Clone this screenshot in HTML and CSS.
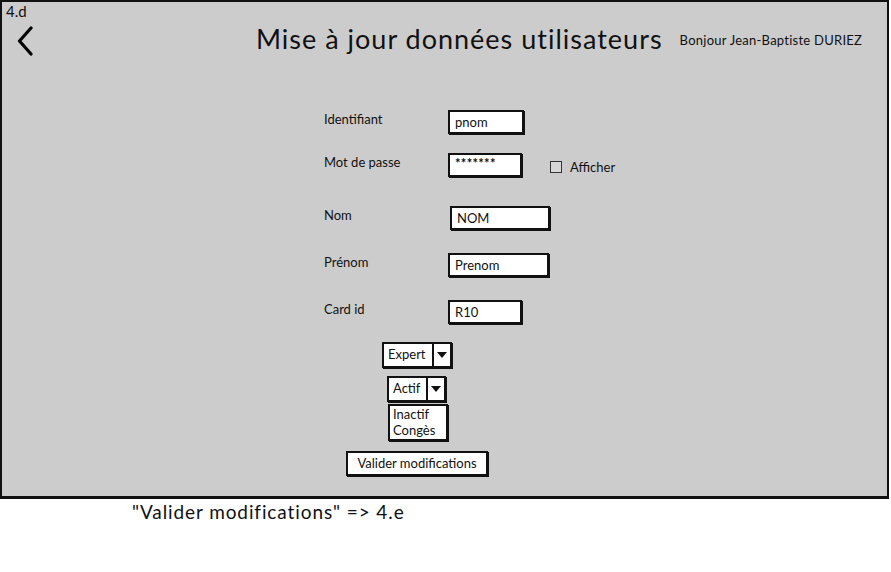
FILE: index.html
```html
<!DOCTYPE html>
<html lang="fr">
<head>
    <meta charset="UTF-8">
    <title>Mise à jour données utilisateurs</title>
    <link rel="stylesheet" href="styles.css">
</head>
<body>
    <div class="frame">
        <div class="tag">4.d</div>
        <div class="topbar">
            <svg class="back" width="18" height="30" viewBox="0 0 18 30">
                <path d="M15 2 L3.5 15 L15 28" fill="none" stroke="#000" stroke-width="3.2" stroke-linecap="round" stroke-linejoin="round"/>
            </svg>
            <h1>Mise à jour données utilisateurs</h1>
            <span class="hello">Bonjour Jean-Baptiste DURIEZ</span>
        </div>

        <div class="form">
            <div class="row tight">
                <label>Identifiant</label>
                <div class="field w74">pnom</div>
            </div>
            <div class="row wide">
                <label>Mot de passe</label>
                <div class="field w72 stars">*******</div>
                <span class="check"><span class="box"></span>Afficher</span>
            </div>
            <div class="row">
                <label>Nom</label>
                <div class="field w98 shift">NOM</div>
            </div>
            <div class="row">
                <label>Prénom</label>
                <div class="field w99">Prenom</div>
            </div>
            <div class="row">
                <label>Card id</label>
                <div class="field w72">R10</div>
            </div>
        </div>

        <div class="controls">
            <div class="combo expert">
                <span class="value">Expert</span>
                <span class="arrow"></span>
            </div>
            <div class="combo actif">
                <span class="value">Actif</span>
                <span class="arrow"></span>
            </div>
            <div class="menu">
                <div>Inactif</div>
                <div>Congès</div>
            </div>
            <div class="btn">Valider modifications</div>
        </div>
    </div>
    <p class="note">"Valider modifications" =&gt; 4.e</p>
</body>
</html>
```

FILE: styles.css
```css
body {
    margin: 0;
    background: #fff;
    font-family: Lato, "Liberation Sans", sans-serif;
    color: #111;
}
.frame {
    width: 885px;
    height: 494px;
    background: #cccccc;
    border: 2px solid #111;
    border-bottom-width: 3px;
}
.tag {
    font-size: 15px;
    line-height: 16px;
    padding: 1px 0 0 4px;
    height: 18px;
}
.topbar {
    display: flex;
    align-items: center;
    height: 34px;
    margin-top: 3px;
}
.back {
    margin-left: 14px;
}
h1 {
    font-size: 27px;
    font-weight: normal;
    margin: -5px 0 0 222px;
    letter-spacing: 1px;
}
.hello {
    font-size: 13px;
    letter-spacing: 0.25px;
    margin: -2px 0 0 17px;
}
.form {
    margin: 52px 0 0 322px;
}
.row {
    display: grid;
    grid-template-columns: 124px max-content max-content;
    justify-content: start;
    align-items: start;
    height: 25px;
    margin-bottom: 22px;
}
.row.tight { margin-bottom: 18px; }
.row.wide { margin-bottom: 28px; }
label {
    font-size: 13px;
    padding-top: 1px;
}
.field {
    background: #fff;
    border: 2px solid #111;
    box-shadow: 1px 1px 0 #111;
    height: 20px;
    line-height: 20px;
    padding-left: 5px;
    font-size: 13px;
}
.field.shift { margin-left: 2px; }
.w72 { width: 65px; }
.w74 { width: 67px; }
.w98 { width: 91px; }
.w99 { width: 92px; }
.stars {
    font-size: 13px;
    font-weight: bold;
    letter-spacing: 0.3px;
    line-height: 17px;
}
.check {
    display: flex;
    align-items: center;
    font-size: 13px;
    margin: 6px 0 0 28px;
}
.check .box {
    width: 10px;
    height: 10px;
    border: 1px solid #333;
    background: #d8d8d8;
    margin-right: 8px;
}
.controls {
    display: flex;
    flex-direction: column;
    align-items: flex-start;
    margin-top: -5px;
}
.combo {
    display: flex;
    background: #fff;
    border: 2px solid #111;
    box-shadow: 1px 1px 0 #111;
    height: 22px;
    font-size: 13px;
}
.combo .value {
    padding: 0 4px;
    line-height: 20px;
    border-right: 2px solid #111;
}
.combo .arrow {
    width: 16px;
    position: relative;
}
.combo .arrow::after {
    content: "";
    position: absolute;
    left: 3px;
    top: 8px;
    border-left: 5px solid transparent;
    border-right: 5px solid transparent;
    border-top: 6px solid #111;
}
.expert {
    margin-left: 380px;
}
.expert .value { width: 40px; }
.actif {
    margin: 8px 0 0 385px;
}
.actif .value { width: 30px; padding-right: 3px; }
.menu {
    margin: 2px 0 0 386px;
    width: 53px;
    background: #fff;
    border: 2px solid #111;
    box-shadow: 1px 1px 0 #111;
    font-size: 13px;
    line-height: 16px;
    padding: 0 0 1px 3px;
}
.btn {
    margin: 10px 0 0 344px;
    width: 138px;
    height: 21px;
    line-height: 21px;
    text-align: center;
    background: #fff;
    border: 2px solid #111;
    box-shadow: 1px 1px 0 #111;
    font-size: 13px;
}
.note {
    margin: 1px 0 0 132px;
    font-size: 19px;
    letter-spacing: 0.9px;
}
```
